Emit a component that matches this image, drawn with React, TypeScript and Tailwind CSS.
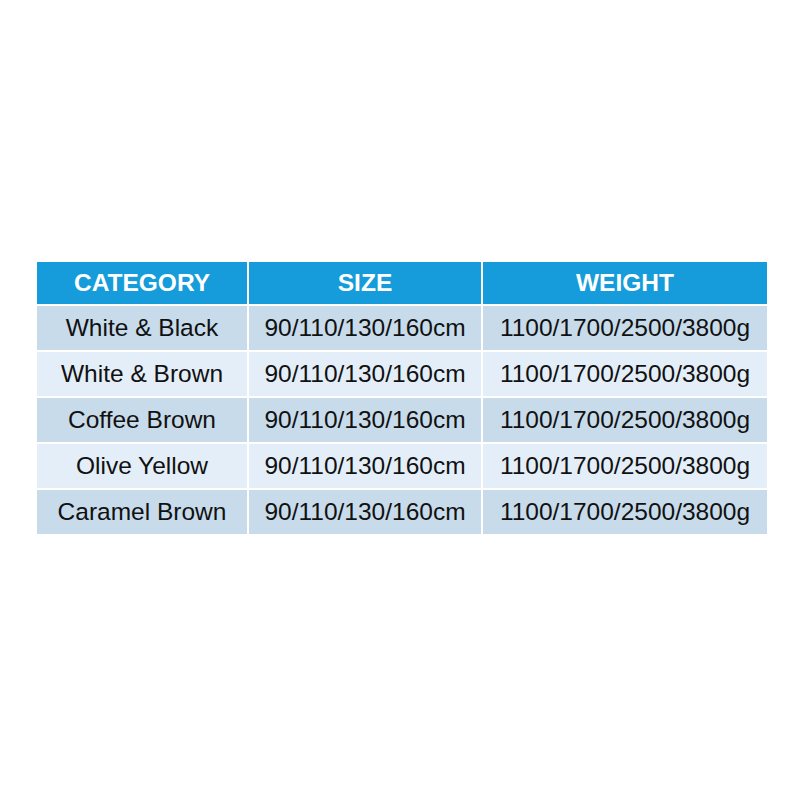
import React from "react";

const rows = [
  "White & Black",
  "White & Brown",
  "Coffee Brown",
  "Olive Yellow",
  "Caramel Brown",
];

export default function App() {
  return (
    <div className="w-[800px] h-[800px] bg-white pt-[262px] pl-[37px]" style={{ fontFamily: '"Liberation Sans", Arial, sans-serif' }}>
      <div className="w-[730px] flex flex-col gap-[2px]">
        <div className="flex gap-[2px] h-[42px] text-white font-bold text-[24.5px]">
          <div className="w-[210px] bg-[#169cda] flex items-center justify-center">CATEGORY</div>
          <div className="w-[232px] bg-[#169cda] flex items-center justify-center">SIZE</div>
          <div className="flex-1 bg-[#169cda] flex items-center justify-center">WEIGHT</div>
        </div>
        {rows.map((r, i) => {
          const bg = i % 2 === 0 ? "bg-[#c8dbeb]" : "bg-[#e4eef8]";
          return (
            <div key={r} className="flex gap-[2px] h-[44px] text-[#111] text-[24.5px]">
              <div className={`w-[210px] ${bg} flex items-center justify-center`}>{r}</div>
              <div className={`w-[232px] ${bg} flex items-center justify-center`}>90/110/130/160cm</div>
              <div className={`flex-1 ${bg} flex items-center justify-center`}>1100/1700/2500/3800g</div>
            </div>
          );
        })}
      </div>
    </div>
  );
}
